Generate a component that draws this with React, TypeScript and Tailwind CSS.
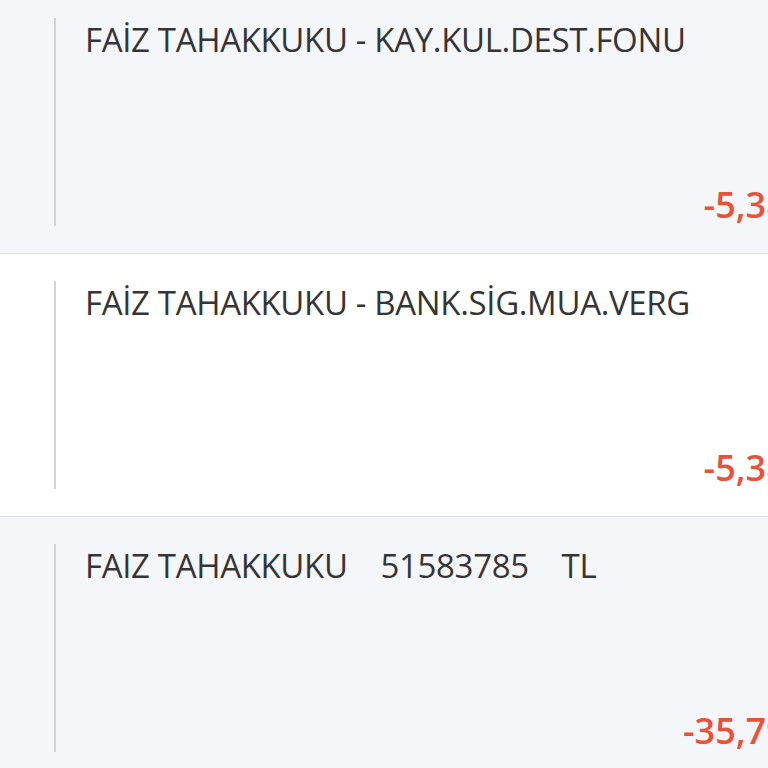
export default function App() {
  const rows = [
    { title: "FAİZ TAHAKKUKU - KAY.KUL.DEST.FONU", amount: "-5,38 TL", bg: "bg-[#f5f6fa]" },
    { title: "FAİZ TAHAKKUKU - BANK.SİG.MUA.VERG", amount: "-5,38 TL", bg: "bg-white" },
    { title: "FAIZ TAHAKKUKU\u00a0\u00a0\u00a0\u00a051583785\u00a0\u00a0\u00a0\u00a0TL", amount: "-35,79 TL", bg: "bg-[#f5f6fa]" },
  ];

  return (
    <div
      className="w-[768px] h-[768px] overflow-hidden bg-[#f5f6fa]"
      style={{ fontFamily: '"Open Sans", "Noto Sans", sans-serif' }}
    >
      <div className="-mt-[9px] w-[900px]">
        {rows.map((r, i) => (
          <div key={i} className={`${r.bg} h-[263px] border-b border-[#dfe0e6] pl-[54px] pt-[27px]`}>
            <div className="flex h-[208px] border-l-2 border-[#d3d4da]">
              <div className="flex flex-1 flex-col justify-between pl-[29px] pb-[1px]">
                <div className="mt-[2px] text-[33px] leading-[40px] tracking-[-0.35px] text-[#353535] whitespace-pre">
                  {r.title}
                </div>
                <div className="self-end pr-[64px] text-[36px] leading-[40px] font-semibold text-[#e8523b]">
                  {r.amount}
                </div>
              </div>
            </div>
          </div>
        ))}
      </div>
    </div>
  );
}
